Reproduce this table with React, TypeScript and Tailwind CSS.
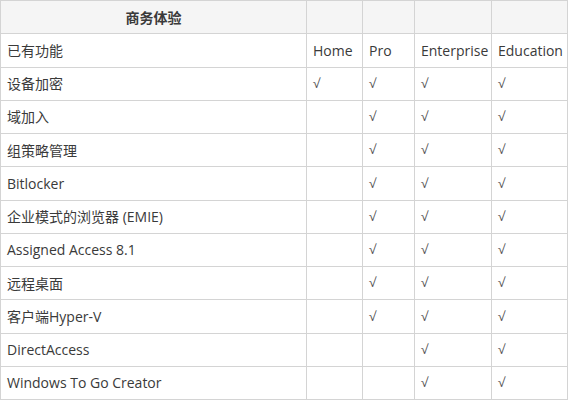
import React from "react";

const rows: [string, boolean, boolean, boolean, boolean][] = [
  ["设备加密", true, true, true, true],
  ["域加入", false, true, true, true],
  ["组策略管理", false, true, true, true],
  ["Bitlocker", false, true, true, true],
  ["企业模式的浏览器 (EMIE)", false, true, true, true],
  ["Assigned Access 8.1", false, true, true, true],
  ["远程桌面", false, true, true, true],
  ["客户端Hyper-V", false, true, true, true],
  ["DirectAccess", false, false, true, true],
  ["Windows To Go Creator", false, false, true, true],
];

const td = "border border-[#d4d4d4] h-[33.25px] px-[6px] text-left align-middle";

export default function App() {
  return (
    <div
      className="w-[568px] h-[400px] bg-white overflow-hidden text-[14px] text-[#3a3a3a]"
      style={{ fontFamily: '"Open Sans", "Noto Sans CJK SC", sans-serif' }}
    >
      <table className="w-[567px] border-collapse table-fixed">
        <colgroup>
          <col className="w-[306px]" />
          <col className="w-[56px]" />
          <col className="w-[52px]" />
          <col className="w-[77px]" />
          <col className="w-[76px]" />
        </colgroup>
        <tbody>
          <tr className="bg-[#f5f5f5]">
            <td className={`${td} !text-center font-semibold`}>商务体验</td>
            <td className={td}></td>
            <td className={td}></td>
            <td className={td}></td>
            <td className={td}></td>
          </tr>
          <tr>
            <td className={td}>已有功能</td>
            <td className={td}>Home</td>
            <td className={td}>Pro</td>
            <td className={td}>Enterprise</td>
            <td className={td}>Education</td>
          </tr>
          {rows.map(([name, ...checks]) => (
            <tr key={name}>
              <td className={`${td} whitespace-nowrap`}>{name}</td>
              {checks.map((c, i) => (
                <td key={i} className={`${td} text-[#555] text-[13px]`}>
                  {c ? "√" : ""}
                </td>
              ))}
            </tr>
          ))}
        </tbody>
      </table>
    </div>
  );
}
